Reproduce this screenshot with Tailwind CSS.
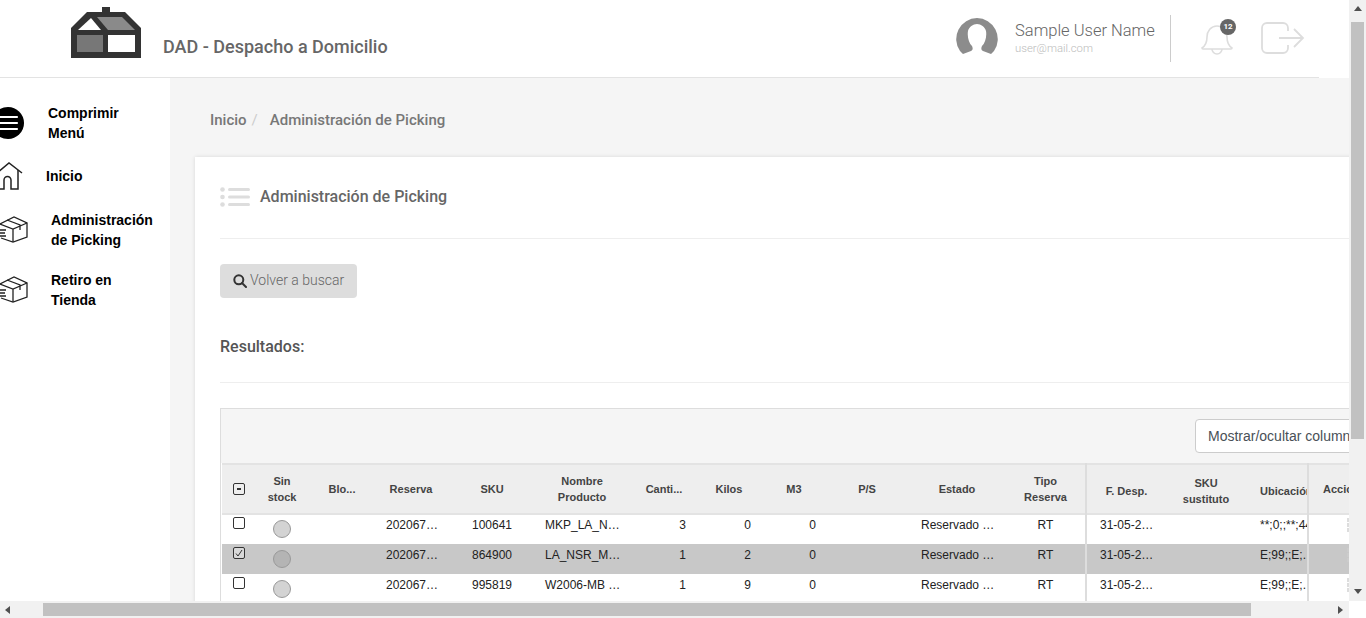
<!DOCTYPE html>
<html lang="es">
<head>
    <meta charset="UTF-8">
    <meta name="viewport" content="width=device-width, initial-scale=1.0">
    <title>DAD - Despacho a Domicilio</title>
    <script src="https://cdn.jsdelivr.net/npm/@tailwindcss/browser@4"></script>
</head>
<body class="bg-white overflow-hidden">
<div class="flex w-[1366px] h-[618px] overflow-hidden font-['Roboto',sans-serif]">

    <!-- Page area + horizontal scrollbar -->
    <div class="w-[1349px] h-[618px] flex flex-col shrink-0">
        <div class="h-[601px] overflow-hidden flex flex-col">

            <!-- Header -->
            <header class="h-[78px] shrink-0 w-[1319px] bg-white border-b border-[#e3e3e3] flex items-start">
                <svg class="ml-[71px] mt-[7px] shrink-0" width="70" height="51" viewBox="71 7 70 51">
                    <path fill="#333" d="M102 7h8v5h15l16 16v30H71V28l16-16h15z"/>
                    <path fill="#fff" d="M78 30l13-12 10 12z"/>
                    <path fill="#8a8a8a" d="M97 17h25l13 13h-27z"/>
                    <rect x="77" y="35" width="26" height="17" fill="#777"/>
                    <rect x="108" y="35" width="27" height="17" fill="#fff"/>
                </svg>
                <div class="ml-[22px] mt-[36px] text-[18px] leading-[22px] font-medium text-[#666] whitespace-nowrap">DAD - Despacho a Domicilio</div>
                <div class="ml-auto flex items-start">
                    <svg class="mt-[18px]" width="42" height="38" viewBox="0 0 42 38">
                        <path fill="#8c8c8c" d="M21 0a21 21 0 0 1 17 33l-3 3-8-3c-2-1-2-3-1-5 3-3 5-9 4-15-1-4-5-7-9-7s-8 3-9 7c-1 6 1 12 4 15 1 2 1 4-1 5l-8 3-3-3A21 21 0 0 1 21 0z"/>
                    </svg>
                    <div class="ml-[17px] mt-[21px] w-[155px]">
                        <div class="text-[16.500px] leading-[20px] font-light text-[#666] whitespace-nowrap">Sample User Name</div>
                        <div class="mt-[1px] text-[11.300px] leading-[14px] font-light text-[#bbb]">user@mail.com</div>
                    </div>
                    <div class="w-px h-[47px] mt-[15px] bg-[#ccc]"></div>
                    <div class="relative ml-[30px] mt-[20px] w-[36px] h-[36px]">
                        <svg width="32" height="34" viewBox="0 0 32 34" fill="none" stroke="#ddd" stroke-width="1.6" class="mt-[1px]">
                            <path d="M1 27c3-2 5-5 5-11 0-6 4-11 10-11s10 5 10 11c0 6 2 9 5 11 0 1 0 1-1 1H2c-1 0-1 0-1-1z"/>
                            <path d="M11 28a5 5 0 0 0 10 0"/>
                        </svg>
                        <span class="absolute left-[19px] top-[-1px] w-4 h-4 rounded-full bg-[#666] text-white text-[8px] font-bold leading-4 text-center">12</span>
                    </div>
                    <svg class="ml-[24px] mt-[22px] mr-[14px]" width="44" height="32" viewBox="0 0 44 32" fill="none" stroke="#ddd" stroke-width="1.8">
                        <path d="M27 9V6a5 5 0 0 0-5-5H6a5 5 0 0 0-5 5v20a5 5 0 0 0 5 5h16a5 5 0 0 0 5-5v-3"/>
                        <path d="M18 16h24M33 7l9 9-9 9"/>
                    </svg>
                </div>
            </header>

            <div class="flex flex-1 min-h-0 bg-[#f5f5f5]">
                <!-- Sidebar -->
                <aside class="w-[170px] shrink-0 bg-white pt-[25px] text-[14px] leading-[20px] font-bold text-black font-['Liberation_Sans',sans-serif]">
                    <div class="flex items-center">
                        <svg class="ml-[-8px] shrink-0" width="32" height="32" viewBox="0 0 32 32">
                            <circle cx="16" cy="16" r="16" fill="#000"/>
                            <path d="M4 10h21M4 16h21M4 22h21" stroke="#fff" stroke-width="2.200" stroke-linecap="round"/>
                        </svg>
                        <span class="ml-[24px]">Comprimir<br>Menú</span>
                    </div>
                    <div class="flex items-center mt-[19px] h-[28px]">
                        <svg class="shrink-0" width="23" height="28" viewBox="0 0 23 28" fill="none" stroke="#222" stroke-width="1.500">
                            <path d="M-3 11L9 1l13 10"/>
                            <path d="M18 8v19h-7V18a3.500 3.500 0 0 0-7 0v9H-1"/>
                        </svg>
                        <span class="ml-[23px]">Inicio</span>
                    </div>
                    <div class="flex items-center mt-[20px]">
                        <svg class="shrink-0" width="28" height="28" viewBox="0 0 28 28" fill="none" stroke="#222" stroke-width="1.300">
                            <path d="M0 8L14 1l13 6v14l-14 5-12-4"/>
                            <path d="M0 8l13 5 14-6M13 13v13M7 4l13 5v5M0 14h6M0 17h5M0 20h6"/>
                        </svg>
                        <span class="ml-[23px]">Administración<br>de Picking</span>
                    </div>
                    <div class="flex items-center mt-[20px]">
                        <svg class="shrink-0" width="28" height="28" viewBox="0 0 28 28" fill="none" stroke="#222" stroke-width="1.300">
                            <path d="M0 8L14 1l13 6v14l-14 5-12-4"/>
                            <path d="M0 8l13 5 14-6M13 13v13M7 4l13 5v5M0 14h6M0 17h5M0 20h6"/>
                        </svg>
                        <span class="ml-[23px]">Retiro en<br>Tienda</span>
                    </div>
                </aside>

                <!-- Content -->
                <main class="flex-1 min-w-0 pl-[25px] overflow-hidden">
                    <div class="h-[79px] pl-[15px] pt-[32px] flex text-[15px] leading-[20px] font-medium text-[#777] whitespace-nowrap">
                        <span>Inicio</span>
                        <span class="ml-[5px] font-normal text-[#ccc]">/</span>
                        <span class="ml-[12px]">Administración de Picking</span>
                    </div>

                    <section class="w-[1300px] h-[600px] bg-white shadow-[0_0_4px_rgba(0,0,0,0.12)] pl-[25px]">
                        <div class="h-[82px] border-b border-[#eee] flex items-center pb-[2px]">
                            <svg width="30" height="20" viewBox="0 0 30 20" fill="#ddd">
                                <circle cx="2.500" cy="2.500" r="2.300"/><circle cx="2.500" cy="10" r="2.300"/><circle cx="2.500" cy="17.500" r="2.300"/>
                                <rect x="8" y="1" width="22" height="3" rx="1.500"/><rect x="8" y="8.500" width="22" height="3" rx="1.500"/><rect x="8" y="16" width="22" height="3" rx="1.500"/>
                            </svg>
                            <h1 class="ml-[10px] text-[16px] leading-[20px] font-medium text-[#666]">Administración de Picking</h1>
                        </div>

                        <button class="mt-[25px] w-[137px] h-[34px] rounded bg-[#ddd] flex items-center pl-[13px] pb-[2px] text-[14px] font-light text-[#666]">
                            <svg width="14" height="14" viewBox="0 0 14 14" fill="none" stroke="#333" stroke-width="2" class="mt-[2px]">
                                <circle cx="5.800" cy="5.800" r="4.500"/><path d="M9 9l4 4" stroke-linecap="round"/>
                            </svg>
                            <span class="ml-[3px]">Volver a buscar</span>
                        </button>

                        <div class="mt-[38px] text-[16px] leading-[22px] font-medium text-[#555]">Resultados:</div>
                        <div class="mt-[24px] border-t border-[#eee]"></div>

                        <!-- Grid -->
                        <div class="mt-[25px] border-t border-l border-[#ddd] font-['Liberation_Sans',sans-serif]">
                            <div class="h-[54px] bg-[#f5f5f5] flex items-start pl-[974px] pt-[10px]">
                                <div class="shrink-0 w-[200px] h-[34px] rounded border border-[#ccc] bg-white pl-[12px] text-[14px] leading-[32px] text-[#495057] whitespace-nowrap">Mostrar/ocultar columnas</div>
                            </div>
                            <table class="ml-[1px] w-[1162px] table-fixed border-collapse text-[12px] text-[#222] whitespace-nowrap">
                                <colgroup>
                                    <col class="w-[28px]"><col class="w-[64px]"><col class="w-[56px]"><col class="w-[82px]"><col class="w-[80px]"><col class="w-[100px]"><col class="w-[64px]"><col class="w-[66px]"><col class="w-[64px]"><col class="w-[82px]"><col class="w-[98px]"><col class="w-[80px]"><col class="w-[80px]"><col class="w-[80px]"><col class="w-[62px]"><col class="w-[76px]">
                                </colgroup>
                                <thead>
                                    <tr class="h-[50px] bg-[#eee] border-y-2 border-[#e3e3e3] text-[11px] leading-[16px] font-bold text-[#444] text-center">
                                        <th class="font-bold pl-[11px]"><span class="block w-[12px] h-[12px] border border-[#333] rounded-[2px] relative"><span class="absolute left-[3px] top-[4px] w-[4px] h-[2px] bg-[#333]"></span></span></th>
                                        <th class="font-bold">Sin<br>stock</th>
                                        <th class="font-bold">Blo...</th>
                                        <th class="font-bold">Reserva</th>
                                        <th class="font-bold">SKU</th>
                                        <th class="font-bold">Nombre<br>Producto</th>
                                        <th class="font-bold">Canti...</th>
                                        <th class="font-bold">Kilos</th>
                                        <th class="font-bold">M3</th>
                                        <th class="font-bold">P/S</th>
                                        <th class="font-bold">Estado</th>
                                        <th class="font-bold">Tipo<br>Reserva</th>
                                        <th class="font-bold pt-[4px] border-l-2 border-[#ddd]">F. Desp.</th>
                                        <th class="font-bold pt-[4px]">SKU<br>sustituto</th>
                                        <th class="font-bold pt-[4px] overflow-hidden text-left pl-[14px]">Ubicación</th>
                                        <th class="font-bold border-l-2 border-[#ddd] pl-[14px] text-left">Acciones</th>
                                    </tr>
                                </thead>
                                <tbody class="leading-[14px]">
                                    <tr class="h-[30px] bg-white">
                                        <td class="align-top pl-[11px] pt-[2px]"><span class="block w-[12px] h-[12px] border border-[#333] rounded-[2px] bg-white"></span></td>
                                        <td class="align-top pt-[5px]"><span class="block mx-auto w-[18px] h-[18px] rounded-full bg-[#d3d3d3] border border-[#999]"></span></td>
                                        <td></td>
                                        <td class="align-top pt-[3px] pl-[16px]">202067…</td>
                                        <td class="align-top pt-[3px] text-center">100641</td>
                                        <td class="align-top pt-[3px] pl-[13px]">MKP_LA_N…</td>
                                        <td class="align-top pt-[3px] pr-[10px] text-right">3</td>
                                        <td class="align-top pt-[3px] pr-[11px] text-right">0</td>
                                        <td class="align-top pt-[3px] pr-[10px] text-right">0</td>
                                        <td></td>
                                        <td class="align-top pt-[3px] pl-[13px]">Reservado …</td>
                                        <td class="align-top pt-[3px] text-center">RT</td>
                                        <td class="align-top pt-[3px] pl-[13px] border-l-2 border-[#ddd]">31-05-2…</td>
                                        <td></td>
                                        <td class="align-top pt-[3px] pl-[14px] overflow-hidden">**;0;;**;44</td>
                                        <td class="align-top pt-[3px] text-center border-l-2 border-[#ddd]"><span class="inline-block ml-[3px] w-[3px] h-[14px] bg-[repeating-linear-gradient(#ddd_0_4px,transparent_4px_5px)]"></span></td>
                                    </tr>
                                    <tr class="h-[30px] bg-[#c8c8c8]">
                                        <td class="align-top pl-[11px] pt-[3px]"><span class="flex items-center justify-center w-[12px] h-[12px] border border-[#333] rounded-[2px] bg-[#d8d8d8]"><svg width="8" height="8" viewBox="0 0 8 8" fill="none" stroke="#333"><path d="M1 4.500L3 7l4-6"/></svg></span></td>
                                        <td class="align-top pt-[6px]"><span class="block mx-auto w-[18px] h-[18px] rounded-full bg-[#b4b4b4] border border-[#999]"></span></td>
                                        <td></td>
                                        <td class="align-top pt-[4px] pl-[16px]">202067…</td>
                                        <td class="align-top pt-[4px] text-center">864900</td>
                                        <td class="align-top pt-[4px] pl-[13px]">LA_NSR_M…</td>
                                        <td class="align-top pt-[4px] pr-[10px] text-right">1</td>
                                        <td class="align-top pt-[4px] pr-[11px] text-right">2</td>
                                        <td class="align-top pt-[4px] pr-[10px] text-right">0</td>
                                        <td></td>
                                        <td class="align-top pt-[4px] pl-[13px]">Reservado …</td>
                                        <td class="align-top pt-[4px] text-center">RT</td>
                                        <td class="align-top pt-[4px] pl-[13px] border-l-2 border-[#ddd]">31-05-2…</td>
                                        <td></td>
                                        <td class="align-top pt-[4px] pl-[14px]">E;99;;E;.</td>
                                        <td class="align-top pt-[4px] text-center border-l-2 border-[#ddd]"><span class="inline-block ml-[3px] w-[3px] h-[14px] bg-[repeating-linear-gradient(#ccc_0_4px,transparent_4px_5px)]"></span></td>
                                    </tr>
                                    <tr class="h-[30px] bg-white">
                                        <td class="align-top pl-[11px] pt-[3px]"><span class="block w-[12px] h-[12px] border border-[#333] rounded-[2px] bg-white"></span></td>
                                        <td class="align-top pt-[6px]"><span class="block mx-auto w-[18px] h-[18px] rounded-full bg-[#d3d3d3] border border-[#999]"></span></td>
                                        <td></td>
                                        <td class="align-top pt-[4px] pl-[16px]">202067…</td>
                                        <td class="align-top pt-[4px] text-center">995819</td>
                                        <td class="align-top pt-[4px] pl-[13px]">W2006-MB …</td>
                                        <td class="align-top pt-[4px] pr-[10px] text-right">1</td>
                                        <td class="align-top pt-[4px] pr-[11px] text-right">9</td>
                                        <td class="align-top pt-[4px] pr-[10px] text-right">0</td>
                                        <td></td>
                                        <td class="align-top pt-[4px] pl-[13px]">Reservado …</td>
                                        <td class="align-top pt-[4px] text-center">RT</td>
                                        <td class="align-top pt-[4px] pl-[13px] border-l-2 border-[#ddd]">31-05-2…</td>
                                        <td></td>
                                        <td class="align-top pt-[4px] pl-[14px]">E;99;;E;.</td>
                                        <td class="align-top pt-[4px] text-center border-l-2 border-[#ddd]"><span class="inline-block ml-[3px] w-[3px] h-[14px] bg-[repeating-linear-gradient(#ddd_0_4px,transparent_4px_5px)]"></span></td>
                                    </tr>
                                </tbody>
                            </table>
                        </div>
                    </section>
                </main>
            </div>
        </div>

        <!-- Horizontal scrollbar -->
        <div class="h-[17px] bg-[#f1f1f1] flex items-center shrink-0">
            <svg class="ml-[5px]" width="6" height="8" viewBox="0 0 6 8"><path d="M5 0v8L0 4z" fill="#505050"/></svg>
            <div class="ml-[32px] w-[1208px] h-[13px] bg-[#c1c1c1]"></div>
            <svg class="ml-[87px]" width="6" height="8" viewBox="0 0 6 8"><path d="M0 0v8l5-4z" fill="#505050"/></svg>
        </div>
    </div>

    <!-- Vertical scrollbar -->
    <div class="w-[17px] h-[618px] shrink-0 flex flex-col">
        <div class="h-[601px] bg-[#f1f1f1] flex flex-col items-center">
            <svg class="mt-[6px]" width="8" height="6" viewBox="0 0 8 6"><path d="M0 5h8L4 0z" fill="#505050"/></svg>
            <div class="mt-[10px] w-[13px] h-[417px] bg-[#c1c1c1]"></div>
            <svg class="mt-[150px]" width="8" height="6" viewBox="0 0 8 6"><path d="M0 0h8L4 5z" fill="#505050"/></svg>
        </div>
        <div class="h-[17px] bg-white"></div>
    </div>
</div>
</body>
</html>
